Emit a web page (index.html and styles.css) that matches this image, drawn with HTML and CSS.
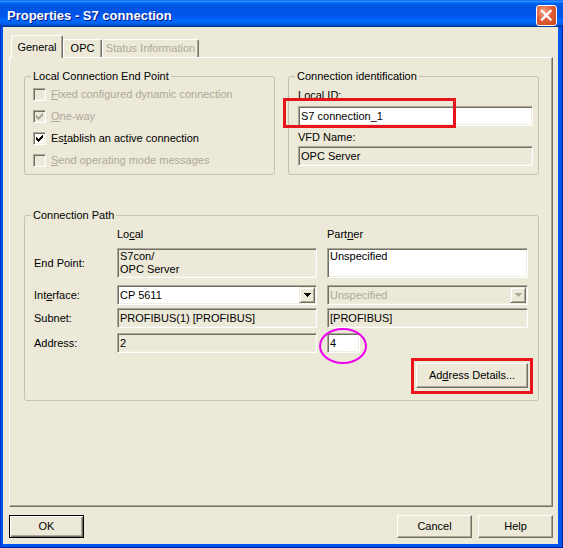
FILE: index.html
```html
<!DOCTYPE html>
<html>
<head>
<meta charset="utf-8">
<title>Properties - S7 connection</title>
<link rel="stylesheet" href="styles.css">
</head>
<body>
<div class="window">
  <div class="titlebar">
    <span class="title">Properties - S7 connection</span>
    <span class="close"><svg width="19" height="19" viewBox="0 0 19 19"><path d="M5 5L13.5 13.5M13.5 5L5 13.5" stroke="#fff" stroke-width="2.3" stroke-linecap="square"/></svg></span>
  </div>
  <div class="client">
    <div class="tabs">
      <div class="tab tab-general active">General</div>
      <div class="tab tab-opc">OPC</div>
      <div class="tab tab-status disabled">Status Information</div>
    </div>
    <div class="panel">
      <div class="toprow">
        <fieldset class="group group-local">
          <legend>Local Connection End Point</legend>
          <div class="check-row disabled"><span class="checkbox"></span><span><u>F</u>ixed configured dynamic connection</span></div>
          <div class="check-row disabled"><span class="checkbox"><svg width="7" height="7" viewBox="0 0 7 7" shape-rendering="crispEdges"><path fill="currentColor" d="M0 2h1v3H0zM1 3h1v3H1zM2 4h1v3H2zM3 3h1v3H3zM4 2h1v3H4zM5 1h1v3H5zM6 0h1v3H6z"/></svg></span><span><u>O</u>ne-way</span></div>
          <div class="check-row"><span class="checkbox"><svg width="7" height="7" viewBox="0 0 7 7" shape-rendering="crispEdges"><path fill="currentColor" d="M0 2h1v3H0zM1 3h1v3H1zM2 4h1v3H2zM3 3h1v3H3zM4 2h1v3H4zM5 1h1v3H5zM6 0h1v3H6z"/></svg></span><span>Es<u>t</u>ablish an active connection</span></div>
          <div class="check-row disabled"><span class="checkbox"></span><span><u>S</u>end operating mode messages</span></div>
        </fieldset>
        <fieldset class="group group-ident">
          <legend>Connection identification</legend>
          <div class="field-label"><u>L</u>ocal ID:</div>
          <div class="textbox id-box">S7 connection_1</div>
          <div class="field-label field-label-2">VFD Name:</div>
          <div class="textbox readonly id-box-2">OPC Server</div>
        </fieldset>
      </div>
      <fieldset class="group group-path">
        <legend>Connection Path</legend>
        <div class="path-row row-head"><span></span><span>Lo<u>c</u>al</span><span>Part<u>n</u>er</span></div>
        <div class="path-row row-end">
          <span class="row-label">End Point:</span>
          <div class="textbox readonly multi">S7con/<br>OPC Server</div>
          <div class="textbox multi">Unspecified</div>
        </div>
        <div class="path-row row-if">
          <span class="row-label">Int<u>e</u>rface:</span>
          <div class="textbox combo"><span class="combo-text">CP 5611</span><span class="combo-btn"><svg width="7" height="4" viewBox="0 0 7 4" shape-rendering="crispEdges"><path fill="currentColor" d="M0 0h7v1H0zM1 1h5v1H1zM2 2h3v1H2zM3 3h1v1H3z"/></svg></span></div>
          <div class="textbox readonly combo disabled"><span class="combo-text">Unspecified</span><span class="combo-btn"><svg width="7" height="4" viewBox="0 0 7 4" shape-rendering="crispEdges"><path fill="currentColor" d="M0 0h7v1H0zM1 1h5v1H1zM2 2h3v1H2zM3 3h1v1H3z"/></svg></span></div>
        </div>
        <div class="path-row row-subnet">
          <span class="row-label">Subnet:</span>
          <div class="textbox readonly">PROFIBUS(1) [PROFIBUS]</div>
          <div class="textbox readonly">[PROFIBUS]</div>
        </div>
        <div class="path-row row-addr">
          <span class="row-label">Address:</span>
          <div class="textbox readonly">2</div>
          <div class="textbox small">4</div>
        </div>
        <div class="row-btn">
          <div class="btn btn-details">Ad<u>d</u>ress Details...</div>
        </div>
      </fieldset>
    </div>
    <div class="buttons">
      <div class="btn btn-default">OK</div>
      <div class="btn-group">
        <div class="btn">Cancel</div>
        <div class="btn">Help</div>
      </div>
    </div>
  </div>
  <div class="mark mark-id"></div>
  <div class="mark mark-details"></div>
  <div class="mark mark-addr"></div>
</div>
</body>
</html>
```
FILE: styles.css
```css
* { box-sizing: border-box; }
html, body { margin: 0; padding: 0; background: #ffffff; }
body {
  font-family: "Liberation Sans", Arial, sans-serif;
  font-size: 11px;
  color: #000;
}
u { text-decoration: underline; text-underline-offset: 1px; }

.window {
  position: relative;
  width: 563px;
  height: 548px;
  display: flex;
  flex-direction: column;
  background: #0055EA;
  box-shadow: inset 1px 0 #0831D9, inset -1px -1px #001EA0;
}

.titlebar {
  height: 27px;
  flex: none;
  padding: 4px 6px 0 7px;
  display: flex;
  align-items: center;
  justify-content: space-between;
  background: linear-gradient(to bottom, #0058EE 0%, #3593FF 4%, #288EFF 6%, #127DFF 8%, #036FFC 10%, #0262EE 14%, #0057E5 20%, #0054E3 24%, #0055EB 56%, #005BF5 66%, #026AFE 76%, #0062EF 86%, #0052D6 92%, #0040AB 96%, #003092 100%);
}
.title {
  color: #fff;
  font-weight: bold;
  font-size: 13px;
  line-height: 16px;
  text-shadow: 1px 1px 0 #0A1883;
  white-space: nowrap;
}
.close {
  width: 21px;
  height: 21px;
  border: 1px solid #fff;
  border-radius: 3px;
  background: radial-gradient(circle at 35% 30%, #F4A184 0%, #E35F38 45%, #C7421A 100%);
  display: flex;
  align-items: center;
  justify-content: center;
}

.client {
  flex: 1;
  margin: 0 5px 4px 3px;
  background: #ECE9D8;
  padding: 8px 5px 6px 6px;
  display: flex;
  flex-direction: column;
}

.tabs {
  height: 22px;
  flex: none;
  display: flex;
  align-items: flex-end;
  padding-left: 2px;
  position: relative;
  z-index: 1;
}
.tab {
  height: 18px;
  background: #ECE9D8;
  border-top: 1px solid #fff;
  border-left: 1px solid #fff;
  border-right: 1px solid #716F64;
  border-radius: 2px 2px 0 0;
  box-shadow: inset -1px 0 #ACA899;
  display: flex;
  align-items: center;
  justify-content: center;
  line-height: 13px;
  white-space: nowrap;
}
.tab.active { height: 23px; margin-bottom: -1px; }
.tab.disabled { color: #ACA899; }
.tab-general { width: 52px; }
.tab-opc { width: 39px; }
.tab-status { width: 97px; }

.panel {
  height: 450px;
  flex: none;
  border: 1px solid;
  border-color: #fff #716F64 #716F64 #fff;
  box-shadow: inset -1px -1px #ACA899;
  padding: 12px 13px 0 14px;
}

.toprow { display: flex; gap: 13px; }

.group {
  margin: 0;
  min-width: 0;
  border: 1px solid #C5C2B2;
  border-radius: 3px;
}
.group legend {
  padding: 0 2px;
  margin-left: -2px;
  line-height: 13px;
  white-space: nowrap;
}
.group-local { flex: 1; padding: 0 6px 3px 8px; }
.group-ident { flex: 1; padding: 6px 5px 8px 9px; }
.group-ident legend { margin-left: -3px; }

.check-row {
  display: flex;
  align-items: center;
  height: 22px;
  white-space: nowrap;
}
.check-row.disabled { color: #ACA899; }
.checkbox {
  width: 13px;
  height: 13px;
  flex: none;
  margin-right: 5px;
  background: #fff;
  border: 1px solid;
  border-color: #ACA899 #fff #fff #ACA899;
  box-shadow: inset 1px 1px #716F64, inset -1px -1px #F1EFE2;
  display: flex;
  align-items: center;
  justify-content: center;
}
.check-row.disabled .checkbox { background: #ECE9D8; }

.field-label { line-height: 13px; white-space: nowrap; }
.field-label-2 { margin-top: 5px; }

.textbox {
  height: 20px;
  background: #fff;
  border: 1px solid;
  border-color: #ACA899 #fff #fff #ACA899;
  box-shadow: inset 1px 1px #716F64, inset -1px -1px #F1EFE2;
  display: flex;
  align-items: center;
  padding-left: 2px;
  line-height: 13px;
  white-space: nowrap;
  overflow: hidden;
}
.textbox.readonly { background: #ECE9D8; }
.id-box { margin-top: 4px; }
.id-box-2 { margin-top: 2px; }
.textbox.multi {
  height: 30px;
  display: block;
  padding-top: 1px;
}
.textbox.small { width: 33px; }

.group-path { margin-top: 34px; padding: 6px 10px 12px 8px; }
.path-row {
  display: grid;
  grid-template-columns: 74px 200px 201px;
  column-gap: 10px;
  align-items: center;
}
.row-label { line-height: 13px; white-space: nowrap; padding-left: 1px; }
.row-head { height: 13px; line-height: 13px; }
.row-end { margin-top: 7px; }
.row-if { margin-top: 7px; }
.row-subnet { margin-top: 3px; }
.row-addr { margin-top: 5px; }
.row-btn { margin-top: 10px; display: flex; justify-content: flex-end; }

.combo-text { flex: 1; }
.combo.disabled { color: #ACA899; }
.combo-btn {
  width: 16px;
  height: 16px;
  flex: none;
  margin-right: 1px;
  background: #ECE9D8;
  border: 1px solid;
  border-color: #F1EFE2 #716F64 #716F64 #F1EFE2;
  box-shadow: inset 1px 1px #fff, inset -1px -1px #ACA899;
  display: flex;
  align-items: center;
  justify-content: center;
  color: #000;
}
.combo.disabled .combo-btn { color: #ACA899; }

.btn {
  width: 75px;
  height: 23px;
  background: #ECE9D8;
  border: 1px solid;
  border-color: #fff #716F64 #716F64 #fff;
  box-shadow: inset -1px -1px #ACA899;
  display: flex;
  align-items: center;
  justify-content: center;
  line-height: 13px;
  white-space: nowrap;
}
.btn-default {
  border-color: #000;
  box-shadow: inset 1px 1px #fff, inset -1px -1px #716F64, inset -2px -2px #ACA899;
}
.btn-details { width: 112px; height: 25px; }

.buttons {
  margin-top: 8px;
  display: flex;
  justify-content: space-between;
}
.btn-group { display: flex; gap: 6px; }

.mark { position: absolute; pointer-events: none; }
.mark-id { left: 283px; top: 98px; width: 173px; height: 30px; border: 3px solid #E8141C; }
.mark-details { left: 411px; top: 358px; width: 122px; height: 36px; border: 3px solid #E8141C; }
.mark-addr { left: 319px; top: 328px; width: 48px; height: 36px; border: 2px solid #F000F0; border-radius: 50%; }
```
